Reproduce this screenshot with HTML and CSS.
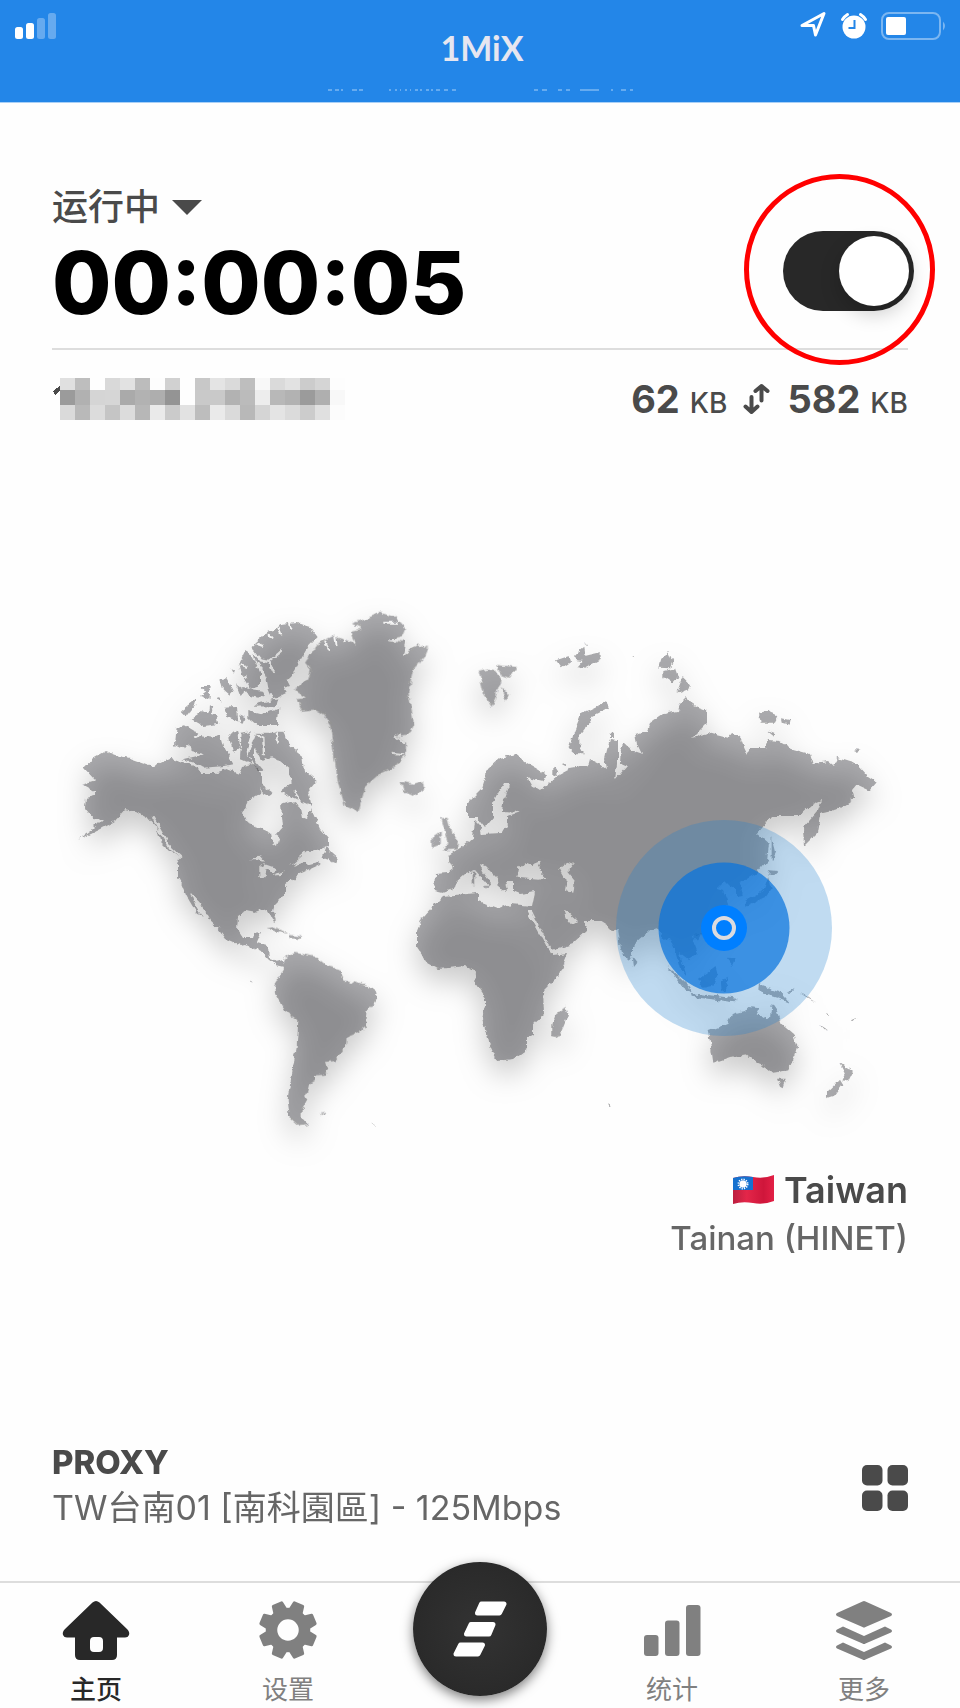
FILE: index.html
```html
<!DOCTYPE html>
<html lang="zh-CN">
<head>
<meta charset="utf-8">
<meta name="viewport" content="width=device-width, initial-scale=1">
<title>1MiX</title>
<link rel="stylesheet" href="styles.css">
</head>
<body>
<header class="topbar">
  <svg class="signal" viewBox="0 0 42 28" aria-hidden="true">
    <rect x="0" y="15" width="8" height="12" rx="2.5"/><rect x="11" y="11" width="8" height="16" rx="2.5"/>
    <g opacity=".3"><rect x="22" y="6" width="8" height="21" rx="2.5"/><rect x="33" y="1" width="8" height="26" rx="2.5"/></g>
  </svg>
  <div class="brand">
    <h1 class="logo">1MiX</h1>
    <svg class="ticker" viewBox="0 0 308 2" aria-hidden="true"><path d="M0 1h4m3 0h4m2 0h2m9 0h5m2 0h4M61 1h2m4 0h2m3 0h1m4 0h2m3 0h1m4 0h3m2 0h2m4 0h3m2 0h2m3 0h4m4 0h4m4 0h4M206 1h4m4 0h5m11 0h4m4 0h4m10 0h19m12 0h2m8 0h5m4 0h3"/></svg>
  </div>
  <svg class="device" viewBox="0 0 150 32" aria-hidden="true">
    <path d="M3 18.500L25 6.500L16.500 28L14.500 18.500Z" fill="none" stroke="#fff" stroke-width="3" stroke-linejoin="round"/>
    <circle cx="55" cy="20" r="11.500" fill="#fff"/>
    <path d="M43.500 12.500a15 15 0 0 1 5-5M61.500 7.500a15 15 0 0 1 5 5" fill="none" stroke="#fff" stroke-width="3" stroke-linecap="round"/>
    <path d="M55.500 13v8h-6" fill="none" stroke="#2386e8" stroke-width="2"/>
    <rect x="83" y="6" width="58" height="26" rx="7" fill="none" stroke="#7bb6f1" stroke-width="2"/>
    <rect x="87" y="10" width="20" height="18" rx="2" fill="#fff"/>
    <path d="M144 14.500q4 4.500 0 9z" fill="#7bb6f1"/>
  </svg>
</header>

<main class="main">
  <section class="status">
    <div>
      <button class="state" type="button">运行中<svg viewBox="0 0 30 15" aria-hidden="true"><path d="M0 0h30L15 15z"/></svg></button>
      <p class="timer">00:00:05</p>
    </div>
    <label class="toggle"><input type="checkbox" role="switch" checked aria-label="运行中"><span class="knob"></span><span class="marker"></span></label>
  </section>

  <section class="traffic">
    <svg class="address" viewBox="0 0 293 42" role="img" aria-label="IP">
      <path d="M1 13L8 8v4L3 17z" fill="#4a4a4a"/>
      <g transform="translate(8 0)"><rect fill="#e0e0e0"/><rect x="15" fill="#bebebe"/><rect x="45" fill="#d9d9d9"/><rect x="60" fill="#e2e2e2"/><rect x="75" fill="#bcbcbc"/><rect x="90" fill="#fdfdfd"/><rect x="105" fill="#d1d1d1"/><rect x="135" fill="#c8c8c8"/><rect x="150" fill="#e4e4e4"/><rect x="165" fill="#dadada"/><rect x="180" fill="#bebebe"/><rect x="195" fill="#f8f8f8"/><rect x="210" fill="#dadada"/><rect x="225" fill="#e2e2e2"/><rect x="240" fill="#ccc"/><rect x="255" fill="#d5d5d5"/><rect x="270" fill="#fdfdfd"/></g>
      <g transform="translate(8 12)"><rect fill="#9b9b9b"/><rect x="15" fill="#b1b1b1"/><rect x="30" fill="#d5d5d5"/><rect x="45" fill="#d6d6d6"/><rect x="60" fill="#aaa"/><rect x="75" fill="#b2b2b2"/><rect x="90" fill="#aeaeae"/><rect x="105" fill="#949494"/><rect x="120" fill="#fefefe"/><rect x="135" fill="#c9c9c9"/><rect x="150" fill="#c9c9c9"/><rect x="165" fill="#b2b2b2"/><rect x="180" fill="#bbb"/><rect x="195" fill="#ededed"/><rect x="210" fill="#b8b8b8"/><rect x="225" fill="#b2b2b2"/><rect x="240" fill="#9b9b9b"/><rect x="255" fill="#afafaf"/><rect x="270" fill="#f8f8f8"/></g>
      <g transform="translate(8 27)"><rect fill="#dadada"/><rect x="15" fill="#b9b9b9"/><rect x="30" fill="#dcdcdc"/><rect x="45" fill="#c5c5c5"/><rect x="60" fill="#dcdcdc"/><rect x="75" fill="#b7b7b7"/><rect x="90" fill="#eaeaea"/><rect x="105" fill="#cbcbcb"/><rect x="120" fill="#e2e2e2"/><rect x="135" fill="#bdbdbd"/><rect x="150" fill="#eaeaea"/><rect x="165" fill="#dadada"/><rect x="180" fill="#b8b8b8"/><rect x="195" fill="#d5d5d5"/><rect x="210" fill="#e4e4e4"/><rect x="225" fill="#dbdbdb"/><rect x="240" fill="#ccc"/><rect x="255" fill="#e0e0e0"/><rect x="270" fill="#fcfcfc"/></g>
    </svg>
    <p class="rates"><strong>62</strong> <span>KB</span>
      <svg viewBox="0 0 28 32" aria-hidden="true"><path d="M8.500 14v15M2.500 23.500l6 5.500l6-5.500M18.500 17.500V3M12.500 8l6-5l6 5"/></svg>
      <strong>582</strong> <span>KB</span></p>
  </section>

  <svg class="map" viewBox="0 560 960 605" role="img" aria-label="Taiwan">
    <defs>
      <filter id="coast" x="0" y="560" width="960" height="605" filterUnits="userSpaceOnUse">
        <feTurbulence type="fractalNoise" baseFrequency=".14" numOctaves="3" seed="4"/>
        <feDisplacementMap in="SourceGraphic" scale="6" xChannelSelector="R" yChannelSelector="G"/>
      </filter>
      <mask id="seas" maskUnits="userSpaceOnUse" x="0" y="560" width="960" height="605">
        <rect y="560" width="960" height="605" fill="#fff"/>
        <g transform="translate(60 590) scale(.3333)"><path d="M570 808L600 793L618 812L590 808ZM598 828L615 820L650 832L645 848L620 835L612 862L598 858ZM635 855L672 838L660 852Z"/><path d="M690 825L740 780L790 775L775 812L745 820L725 805Z"/><path d="M575 175L600 205L630 210L665 180M625 210L642 245M605 230L618 265M275 675L330 770L362 800M590 430L610 440L612 490M650 425L655 455M632 500L645 540M700 600L720 630M655 108l10 25M625 130l12 15M590 160l22 8M690 95l5 18M542 220l20 8M545 260l18-5" fill="none" stroke="#000" stroke-width="7"/></g>
        <g transform="translate(460 620) scale(.3333)"><path d="M172 770L178 742L196 724L215 732L245 720L235 742L262 770L235 776ZM298 742L325 722L342 728L325 750L347 776L340 812L315 808L320 780Z"/></g>
        <g transform="translate(280 590) scale(.3333)"><path d="M165 130l5 35M185 125l10 30M205 115l20 45M135 150l15 30M310 95h40M325 145l55-3l-8 55M345 435l30 20M335 485l40 5" fill="none" stroke="#000" stroke-width="6"/></g>
      </mask>
    </defs>
    <g class="land">
    <g filter="url(#coast)"><g mask="url(#seas)">
      <path d="M105 750L115 754L130 757L153 765L170 757L185 761L198 767L202 772L215 772L227 768L240 773L243 765L253 763L262 773L262 783L260 792L250 798L243 812L247 822L260 827L271 832L273 843L277 846L279 838L277 832L283 825L281 803L290 800L300 807L302 817L307 818L311 808L315 817L320 828L329 838L329 845L317 850L305 852L293 865L312 858L320 863L307 869L298 873L295 877L285 885L285 893L275 903L273 910L276 920L272 918L269 912L263 909L255 912L245 910L238 915L237 928L243 937L252 937L254 931L262 930L257 942L268 945L269 957L275 961L282 959L284 966L275 964L267 957L262 951L252 946L245 943L240 944L226 938L218 927L210 920L202 904L190 891L196 907L203 916L196 911L186 894L181 882L178 877L178 863L180 857L170 850L160 840L157 827L148 817L137 811L125 808L115 820L100 828L78 839L93 828L103 818L93 817L85 807L86 797L95 795L95 790L82 783L95 779L84 767L93 757Z"/>
      <g transform="translate(60 590) scale(.3333)">
        <path d="M350 410L375 403L412 425L395 450L375 475L345 460ZM390 450L420 435L460 440L478 430L490 470L505 490L520 520L495 525L430 530L400 512L370 505L435 490L395 480ZM575 165L615 130L640 120L660 100L710 93L750 105L773 135L745 165L720 210L705 240L680 265L690 285L670 290L680 305L640 325L625 290L620 265L605 230L585 205ZM555 180L575 192L600 240L600 285L570 295L545 250L538 215ZM565 360L600 370L655 350L650 402L590 402L565 380ZM600 335L655 325L650 345L580 347ZM395 385L430 360L470 370L478 398L430 405ZM362 360L410 322L405 345L380 378ZM425 285L452 285L448 325L420 315L440 300ZM478 265L500 262L520 300L510 312L485 290ZM490 350L528 348L532 390L500 378ZM528 280L555 300L542 315ZM538 370L558 378L550 402L538 395ZM505 430L535 418L540 470L520 485ZM545 425L575 420L560 480L575 520L540 505ZM590 425L670 425L690 465L730 495L735 540L770 570L745 600L755 645L700 620L660 600L695 575L690 535L660 510L625 500L605 510L585 470L585 510L610 540L590 540L565 490ZM605 580L642 605L625 618L605 608ZM545 290L610 300L615 320L560 310ZM515 232l10 4l-3 10ZM475 318l8 2v12ZM450 345l10 8l-4 22l-8-8ZM800 768L815 785L832 800L826 814L788 800Z"/>
      </g>
      <g transform="translate(280 590) scale(.3333)">
        <path d="M118 155L160 135L190 145L225 155L215 120L245 112L215 98L265 80L300 65L345 78L378 115L370 135L325 148L380 152L370 195L415 160L445 170L435 195L400 235L385 300L402 400L385 430L350 435L378 455L378 495L340 530L305 545L255 590L235 663L195 645L175 580L160 480L150 400L130 370L105 355L65 360L50 325L78 320L40 295L85 265L92 235L75 215ZM362 572L400 578L430 570L432 595L400 615L372 603ZM596 242L640 232L665 265L635 348L612 310ZM648 222L708 228L690 264L665 255ZM662 288L690 315L678 328ZM484 682L502 680L515 725L535 750L530 775L488 778L505 755L493 715ZM458 737L482 720L482 758L458 768Z"/>
      </g>
      <path d="M435 873L434 890L442 892L453 888L455 882L465 873L475 869L483 878L489 885L491 882L483 871L480 863L485 865L498 878L499 889L503 888L507 890L505 880L513 880L513 890L520 893L535 891L532 905L510 903L500 907L497 907L478 900L478 892L443 895L433 905L422 917L417 930L417 947L427 962L438 968L465 965L476 971L475 982L485 997L485 1005L482 1017L488 1040L497 1060L513 1058L527 1048L527 1037L533 1033L533 1023L544 1013L543 990L560 973L568 953L553 955L548 947L527 910L532 910L552 949L573 942L588 928L582 918L573 923L568 922L563 909L567 910L578 920L600 920L608 925L612 931L617 928L620 947L628 960L633 953L633 945L650 929L658 927L662 938L670 937L675 950L680 967L687 976L682 960L680 952L688 958L698 952L692 935L700 933L715 925L725 913L728 902L723 890L717 888L725 880L730 885L737 888L737 896L743 895L740 882L757 872L767 860L769 843L757 833L772 815L799 815L812 803L822 799L818 810L803 827L804 845L817 832L820 813L837 809L853 798L852 789L857 783L870 789L877 781L868 775L857 763L837 757L833 765L828 761L813 763L810 753L792 748L780 741L768 740L765 747L750 747L747 752L743 743L740 735L732 732L728 737L708 732L692 737L707 722L707 710L693 705L687 696L680 703L678 710L663 713L650 722L647 730L635 733L637 743L642 753L633 750L625 743L621 747L620 762L627 765L615 779L617 763L617 738L610 737L605 757L607 768L600 763L590 758L588 765L570 768L557 775L540 790L532 785L527 776L543 780L546 773L527 762L515 753L500 757L488 768L482 787L467 802L467 817L477 817L485 827L493 817L493 802L503 783L510 783L503 802L502 810L520 811L508 815L508 822L502 832L482 833L480 825L475 820L473 837L460 847L447 855L453 868L448 872Z"/>
      <g transform="translate(220 850) scale(.3333)">
        <path d="M190 325L225 305L290 318L320 345L360 355L370 385L440 405L470 425L468 445L443 480L438 520L425 542L380 560L378 585L345 630L318 633L325 655L315 668L285 670L285 690L270 700L265 725L255 730L262 745L245 775L245 800L268 825L240 828L210 800L203 745L212 690L230 590L235 510L195 480L165 425L163 400L188 360ZM1036 468L1044 490L1015 560L997 555L997 520L1008 490ZM140 232L165 228L205 248L180 244ZM210 252L245 256L238 264L212 262ZM298 788l18-2l-6 8ZM452 816l10 4l3 6ZM90 386l10 4l-4 4ZM758 62h8v40h-8ZM790 105h18v6h-18Z"/>
      </g>
      <g transform="translate(600 640) scale(.3333)">
        <path d="M185 55L205 30L218 60L210 82L178 80ZM190 90L225 82L235 110L220 128L190 108ZM248 108L270 130L265 142L230 155ZM480 215L500 210L535 225L525 245L485 245ZM543 232L572 238L568 248L545 242ZM500 268L523 275L520 284ZM760 325L785 326L770 336ZM515 585L528 635L515 660ZM510 688L535 690L520 705L508 705ZM505 705L515 740L495 768L440 795L435 780L490 750ZM95 45l8 3l-6 3ZM160 178l5 4ZM205 182l4 4Z"/>
      </g>
      <g transform="translate(460 620) scale(.3333)">
        <path d="M438 244L447 260L400 284L378 318L358 345L358 380L372 400L348 400L326 380L343 330L363 280L400 263ZM288 118L325 106L330 125L305 142ZM346 100L370 80L374 105L422 94L422 114L370 142L354 138L370 120L348 118ZM280 440L295 450L290 465L280 462ZM306 430l12-4v10ZM450 338h12v10h-12ZM372 68h8v4ZM495 158l8 4ZM512 106l8 4ZM200 140l10-4ZM172 184l10 2Z"/>
      </g>
      <g transform="translate(600 810) scale(.3333)">
        <path d="M323 660L380 640L395 610L435 600L445 588L480 592L470 610L500 628L510 620L515 578L530 600L545 640L580 670L592 705L580 745L565 778L520 785L495 765L470 755L440 730L390 738L340 755L332 700ZM531 803L557 803L548 832L540 827ZM720 753L740 768L760 780L744 812L728 807L738 785ZM720 803L730 820L707 852L678 862L678 846L700 826ZM203 468L230 488L268 525L272 545L245 525ZM272 546L330 553L410 563L400 574L330 564L275 557ZM295 505L330 480L350 465L355 485L340 525L310 530L298 520ZM362 508L388 500L375 515L385 535L365 540ZM480 520L540 540L570 575L530 560L490 548L478 535ZM98 438L112 455L102 468ZM285 368L305 365L295 385L278 385ZM380 440L410 442L400 465ZM560 545L585 532L575 545ZM598 545L620 555L648 575L625 562ZM660 643L684 658L674 658ZM750 625l16-8l-8 10ZM678 606l8 12v-8ZM24 880l12 6l-8 2ZM816 598l10 4Z"/>
      </g>
    </g></g>
    </g>
    <circle cx="724" cy="927" r="108" fill="#1f81cf" fill-opacity=".28"/>
    <circle cx="724" cy="927" r="65.500" fill="#0873dd" fill-opacity=".72"/>
    <circle cx="724" cy="927" r="23" fill="#007fff"/>
    <circle cx="724" cy="927" r="10" fill="none" stroke="#dbdbdf" stroke-width="4"/>
  </svg>

  <section class="location">
    <h2><svg viewBox="0 0 42 30" aria-hidden="true"><defs><clipPath id="wave"><path d="M1 3Q10 0 21 2T42 0V26Q32 30 21 28T1 29Z"/></clipPath><linearGradient id="red"><stop stop-color="#b91e3f"/><stop offset=".35" stop-color="#e42649"/><stop offset=".75" stop-color="#cf163b"/><stop offset="1" stop-color="#e32046"/></linearGradient></defs><g clip-path="url(#wave)"><path fill="url(#red)" d="M0 0h42v30H0z"/><path fill="#1671cf" d="M0 0h21v15H0z"/></g><circle cx="11" cy="9" r="3.500" fill="#fff"/><circle cx="11" cy="9" r="4.500" fill="none" stroke="#fff" stroke-width="2" stroke-dasharray="1.200 1.156"/></svg>Taiwan</h2>
    <p>Tainan (HINET)</p>
  </section>

  <section class="proxy">
    <div><h2>PROXY</h2><p>TW台南01 [南科園區] - 125Mbps</p></div>
    <button type="button" aria-label="PROXY"><svg viewBox="0 0 46 46" aria-hidden="true"><rect width="20.500" height="20.500" rx="5"/><rect x="25.500" width="20.500" height="20.500" rx="5"/><rect y="25.500" width="20.500" height="20.500" rx="5"/><rect x="25.500" y="25.500" width="20.500" height="20.500" rx="5"/></svg></button>
  </section>
</main>

<nav class="tabs">
  <a class="tab active" href="#home"><svg viewBox="0 0 66 60" aria-hidden="true"><path fill-rule="evenodd" d="M29.500 2.500Q33 -.5 36.500 2.500L64 29Q67 32 66 35Q65 37.500 62 37.500H54V55Q54 60 49 60H17Q12 60 12 55V37.500H4Q1 37.500 0 35Q-1 32 2 29ZM31 37Q27 37 27 41V48Q27 52 31 52H36Q40 52 40 48V41Q40 37 36 37Z"/></svg>主页</a>
  <a class="tab" href="#settings"><svg viewBox="0 0 60 60" aria-hidden="true"><circle cx="30" cy="30" r="16.500" fill="none" stroke="currentColor" stroke-width="11.500"/><g transform="translate(30 30)"><path id="tooth" transform="rotate(22.500)" stroke="currentColor" stroke-width="3" stroke-linejoin="round" d="M-6-19L-4.500-27.500H4.500L6-19Z"/><use href="#tooth" transform="rotate(45)"/><use href="#tooth" transform="rotate(90)"/><use href="#tooth" transform="rotate(135)"/><use href="#tooth" transform="rotate(180)"/><use href="#tooth" transform="rotate(225)"/><use href="#tooth" transform="rotate(270)"/><use href="#tooth" transform="rotate(315)"/></g></svg>设置</a>
  <a class="tab center" href="#dashboard" aria-label="1MiX"><span class="disc"><svg viewBox="0 0 60 60" aria-hidden="true"><g stroke="#fff" stroke-width="5" stroke-linejoin="round"><path d="M31.500 5H54L49.500 14H27.500ZM21 25.500H43L39 35H16.500ZM10.500 46H32.500L28 55H6Z"/></g></svg></span></a>
  <a class="tab" href="#stats"><svg viewBox="0 0 60 60" aria-hidden="true"><rect x="2" y="35" width="14.500" height="21" rx="3"/><rect x="23" y="20.500" width="14.500" height="35.500" rx="3"/><rect x="44" y="5" width="14.500" height="51" rx="3"/></svg>统计</a>
  <a class="tab" href="#more"><svg viewBox="0 0 60 60" aria-hidden="true"><path d="M28.500 1.500Q30 .5 31.500 1.500L57 13Q59 14.500 57 16L31.500 27Q30 28 28.500 27L3 16Q1 14.500 3 13ZM3 29.500L9 26.500L30 36L51 26.500L57 29.500Q59 31 57 32.500L31.500 43.500Q30 44.500 28.500 43.500L3 32.500Q1 31 3 29.500ZM3 45.500L9 42.500L30 52L51 42.500L57 45.500Q59 47 57 48.500L31.500 59.500Q30 60.500 28.500 59.500L3 48.500Q1 47 3 45.500Z"/></svg>更多</a>
</nav>
</body>
</html>
```
FILE: styles.css
```css
* { box-sizing: border-box; }
body {
  margin: 0;
  min-height: 100vh;
  display: flex;
  flex-direction: column;
  background: #fefefe;
  color: #4a4a4a;
  font-family: Inter, "Noto Sans CJK SC", sans-serif;
}
h1, h2, p { margin: 0; }
button { border: 0; padding: 0; background: none; color: inherit; font: inherit; cursor: pointer; }
svg { display: block; flex: none; overflow: visible; }

.topbar {
  display: grid;
  grid-template-columns: 1fr auto 1fr;
  height: 103px;
  padding: 0 11px 0 15px;
  background: #2386e8;
  border-bottom: 1px solid #a9d0f7;
}
.signal { width: 42px; height: 28px; margin-top: 12px; fill: #fff; }
.brand { display: flex; flex-direction: column; align-items: center; padding-top: 26px; }
.logo {
  font: 700 34px/44px Lato, sans-serif;
  color: #e6e6f0;
}
.ticker { width: 308px; height: 2px; margin-top: 19px; fill: none; stroke: #a9d0f7; stroke-width: 1; }
.device { width: 150px; height: 32px; margin-top: 7px; justify-self: end; }

.main { padding-top: 82px; }
.status {
  display: flex;
  justify-content: space-between;
  align-items: flex-start;
  margin: 0 52px;
  padding-bottom: 21px;
  border-bottom: 2px solid #ddd;
}
.state {
  display: flex;
  align-items: center;
  gap: 12px;
  font-size: 36px;
  font-weight: 500;
  line-height: 44px;
}
.state svg { width: 30px; height: 15px; fill: #4a4a4a; }
.timer { margin-top: 10px; font-size: 86px; font-weight: 800; line-height: 88px; color: #000; }

.toggle {
  position: relative;
  display: block;
  width: 131px;
  height: 80px;
  margin: 46px -6px 0 0;
}
.toggle input {
  appearance: none;
  width: 100%;
  height: 100%;
  margin: 0;
  border-radius: 40px;
  background: #282828;
}
.knob {
  position: absolute;
  top: 5px;
  right: 5px;
  width: 70px;
  height: 70px;
  border-radius: 50%;
  background: #fff;
  box-shadow: 0 8px 20px rgba(0, 0, 0, .2);
}
.marker {
  position: absolute;
  top: -57px;
  right: -21px;
  width: 191px;
  height: 191px;
  border: 5px solid #f00;
  border-radius: 50%;
  pointer-events: none;
}

.traffic {
  display: flex;
  justify-content: space-between;
  align-items: center;
  height: 50px;
  margin: 24px 52px 0;
}
.address { width: 293px; height: 42px; shape-rendering: crispEdges; }
.address rect { width: 15px; height: 15px; }
.rates { display: flex; align-items: baseline; font-size: 28px; font-weight: 500; gap: 10px; }
.rates strong { font-size: 38px; font-weight: 700; }
.rates svg {
  width: 28px;
  height: 32px;
  margin: 0 6px;
  align-self: center;
  fill: none;
  stroke: #4a4a4a;
  stroke-width: 4;
  stroke-linecap: round;
  stroke-linejoin: round;
}

.map { width: 100%; margin-top: 137px; }
.land { fill: #303034; fill-opacity: .4; filter: drop-shadow(0 14px 14px rgba(0, 0, 0, .5)); }

.location { margin: 0 52px; text-align: right; }
.location h2 {
  display: flex;
  justify-content: flex-end;
  align-items: center;
  gap: 10px;
  font-size: 36px;
  font-weight: 600;
  line-height: 48px;
}
.location svg { width: 42px; height: 30px; }
.location p { font-size: 33px; font-weight: 500; line-height: 48px; color: #666; }

.proxy {
  display: flex;
  justify-content: space-between;
  align-items: center;
  margin: 177px 52px 49px;
}
.proxy h2 { font-size: 33px; font-weight: 800; line-height: 46px; }
.proxy p { font-size: 34px; line-height: 46px; color: #666; }
.proxy button { margin-top: 6px; }
.proxy button svg { width: 46px; height: 46px; fill: #4a4a4a; }

.tabs {
  display: flex;
  margin-top: auto;
  border-top: 2px solid #ddd;
}
.tab {
  flex: 1;
  display: flex;
  flex-direction: column;
  align-items: center;
  gap: 15px;
  padding: 17px 0 3px;
  font-size: 26px;
  line-height: 30px;
  color: #808080;
  text-decoration: none;
}
.tab svg { height: 60px; fill: currentColor; }
.active { color: #282828; font-weight: 500; }
.center { position: relative; }
.disc {
  position: absolute;
  top: -21px;
  left: 50%;
  display: grid;
  place-items: center;
  width: 134px;
  height: 134px;
  margin-left: -67px;
  border-radius: 50%;
  background: radial-gradient(#333, #262626);
  box-shadow: 0 4px 12px rgba(0, 0, 0, .5);
}
.disc svg { width: 60px; fill: #fff; }
```
